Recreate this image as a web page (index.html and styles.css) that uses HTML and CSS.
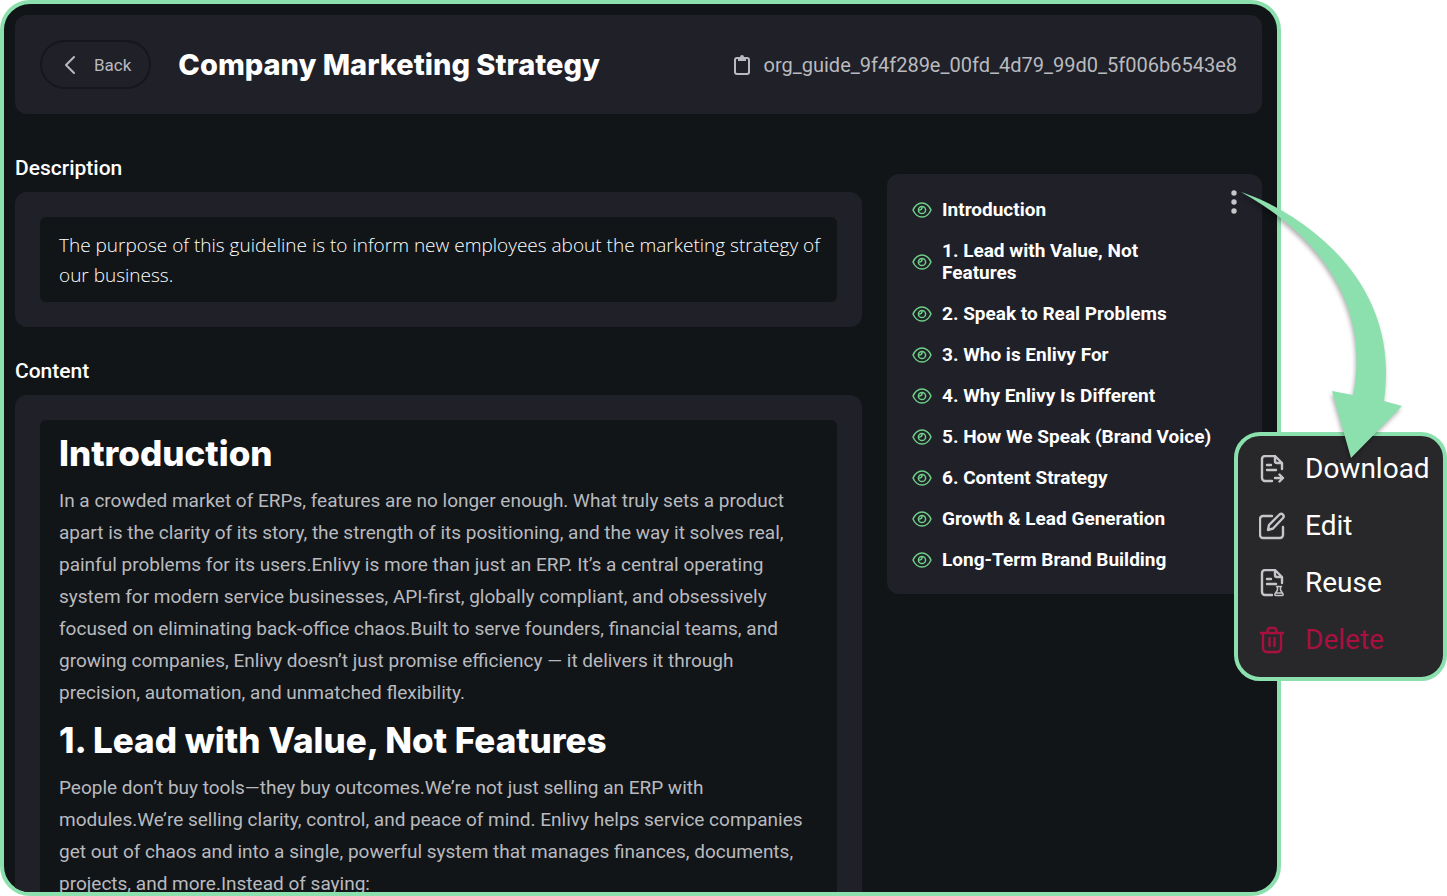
FILE: index.html
```
<!DOCTYPE html>
<html lang="en">
<head>
    <meta charset="UTF-8">
    <meta name="viewport" content="width=device-width, initial-scale=1.0">
    <title>Company Marketing Strategy</title>
    <link rel="stylesheet" href="styles.css">
</head>
<body>

    <!-- Shared icons -->
    <svg class="sprite" aria-hidden="true">
        <symbol id="eye" viewBox="0 0 20 16">
            <path d="M1 8C2.500 4.500 6 1 10 1s7.500 3.500 9 7c-1.500 3.500-5 7-9 7S2.500 11.500 1 8z"/>
            <circle cx="10" cy="8" r="3.600"/>
            <path d="M10 5.500c0 1.500-.8 2.300-2.300 2.400"/>
        </symbol>
        <symbol id="doc" viewBox="0 0 26 28">
            <path d="M13 26H6a3 3 0 0 1-3-3V4a3 3 0 0 1 3-3h10l7 7v6M16 1v5a2 2 0 0 0 2 2h5M8 10h4M8 15h9"/>
        </symbol>
    </svg>

    <div class="page">
        <main class="window">
            <header class="header card">
                <button type="button" class="back">
                    <svg width="12" height="20" viewBox="0 0 12 20"><path d="M10 2L2 10l8 8"/></svg>
                    Back
                </button>
                <h1>Company Marketing Strategy</h1>
                <button type="button" class="guide-id">
                    <svg width="16" height="20" viewBox="0 0 16 20">
                        <rect x="1" y="3" width="14" height="16" rx="2"/>
                        <path class="clip" d="M4 2h2a2 2 0 0 1 4 0h2v4H4z"/>
                    </svg>
                    org_guide_9f4f289e_00fd_4d79_99d0_5f006b6543e8
                </button>
            </header>

            <div class="columns">
                <div class="left">
                    <section>
                        <h3>Description</h3>
                        <div class="card block">
                            <p class="inner description">The purpose of this guideline is to inform new employees about the marketing strategy of<br>
                            our business.</p>
                        </div>
                    </section>
                    <section>
                        <h3>Content</h3>
                        <div class="card block">
                            <article class="inner content">
                                <h2>Introduction</h2>
                                <p>In a crowded market of ERPs, features are no longer enough. What truly sets a product<br>
                                apart is the clarity of its story, the strength of its positioning, and the way it solves real,<br>
                                painful problems for its users.Enlivy is more than just an ERP. It’s a central operating<br>
                                system for modern service businesses, API-first, globally compliant, and obsessively<br>
                                focused on eliminating back-office chaos.Built to serve founders, financial teams, and<br>
                                growing companies, Enlivy doesn’t just promise efficiency — it delivers it through<br>
                                precision, automation, and unmatched flexibility.</p>
                                <h2>1. Lead with Value, Not Features</h2>
                                <p>People don’t buy tools—they buy outcomes.We’re not just selling an ERP with<br>
                                modules.We’re selling clarity, control, and peace of mind. Enlivy helps service companies<br>
                                get out of chaos and into a single, powerful system that manages finances, documents,<br>
                                projects, and more.Instead of saying:</p>
                            </article>
                        </div>
                    </section>
                </div>

                <nav class="card toc" aria-label="Contents">
                    <ul>
                        <li><a href="#"><svg><use href="#eye"/></svg>Introduction</a></li>
                        <li><a href="#"><svg><use href="#eye"/></svg>1. Lead with Value, Not<br>Features</a></li>
                        <li><a href="#"><svg><use href="#eye"/></svg>2. Speak to Real Problems</a></li>
                        <li><a href="#"><svg><use href="#eye"/></svg>3. Who is Enlivy For</a></li>
                        <li><a href="#"><svg><use href="#eye"/></svg>4. Why Enlivy Is Different</a></li>
                        <li><a href="#"><svg><use href="#eye"/></svg>5. How We Speak (Brand Voice)</a></li>
                        <li><a href="#"><svg><use href="#eye"/></svg>6. Content Strategy</a></li>
                        <li><a href="#"><svg><use href="#eye"/></svg>Growth &amp; Lead Generation</a></li>
                        <li><a href="#"><svg><use href="#eye"/></svg>Long-Term Brand Building</a></li>
                    </ul>
                    <button type="button" class="more" aria-label="More actions">
                        <svg width="6" height="24" viewBox="0 0 6 24">
                            <circle cx="3" cy="3" r="2.700"/><circle cx="3" cy="12" r="2.700"/><circle cx="3" cy="21" r="2.700"/>
                        </svg>
                    </button>
                </nav>
            </div>
        </main>

        <div class="menu">
            <button type="button">
                <svg viewBox="0 0 26 28"><use href="#doc"/><path d="M16 23h8M20.500 19.500L24 23l-3.500 3.500"/></svg>
                Download
            </button>
            <button type="button">
                <svg viewBox="0 0 26 28"><path d="M13 4H4a3 3 0 0 0-3 3v16a3 3 0 0 0 3 3h17a3 3 0 0 0 3-3v-8M9 18l1-5L20.500 2.500c2.500-2 5.500 1 3.500 3.500L14 16.500z"/></svg>
                Edit
            </button>
            <button type="button">
                <svg viewBox="0 0 26 28"><use href="#doc"/><path class="thin" d="M17.500 17.500h5M18.500 18v3l-2.500 4c-.5 1 0 1.500 1 1.500h6c1 0 1.500-.5 1-1.500l-2.500-4v-3M17 24h6"/></svg>
                Reuse
            </button>
            <button type="button" class="delete">
                <svg viewBox="0 0 26 28"><path d="M2 7h22M8 6.500l1-3a2 2 0 0 1 2-1.500h4a2 2 0 0 1 2 1.500l1 3M4 7.500V22a4 4 0 0 0 4 4h10a4 4 0 0 0 4-4V7.500M10.500 12v8M15.500 12v8"/></svg>
                Delete
            </button>
        </div>

        <svg class="arrow" width="170" height="272" viewBox="0 0 170 272" aria-hidden="true">
            <path d="M1 2C50 18 146 76 146 182C146 193 145 203 144 211L162 216L111 268L92 201L113 205C130 120 85 48 1 2z"/>
        </svg>
    </div>

</body>
</html>
```

FILE: styles.css
```
* {
    box-sizing: border-box;
}

body {
    margin: 0;
    background-color: #fff;
    color: #fff;
    font-family: Roboto, sans-serif;
    font-size: 19px;
}

h1, h2, h3, p, ul {
    margin: 0;
    padding: 0;
}

button {
    background: none;
    border: none;
    padding: 0;
    color: inherit;
    font: inherit;
    cursor: pointer;
}

svg {
    flex: none;
    fill: none;
    stroke: currentColor;
    stroke-width: 2;
    stroke-linecap: round;
    stroke-linejoin: round;
}

.sprite {
    position: absolute;
    width: 0;
    height: 0;
}

.page {
    position: relative;
    height: 100vh;
    padding-right: 166px;
    overflow: hidden;
}

.window {
    height: 100%;
    padding: 11px 15px 0 11px;
    overflow: hidden;
    background-color: #111518;
    border: 4px solid #8be0ae;
    border-radius: 30px;
}

.card {
    background-color: #1f2028;
    border-radius: 12px;
}

.header {
    display: flex;
    align-items: center;
    padding: 25px;
}

.back {
    display: flex;
    align-items: center;
    gap: 18px;
    height: 49px;
    padding: 0 18px 0 22px;
    border: 2px solid #15171c;
    border-radius: 25px;
    color: #b9babf;
    font-size: 17px;
}

h1 {
    margin-left: 27px;
    font-family: Inter, sans-serif;
    font-size: 29px;
    font-weight: 800;
    line-height: 36px;
}

.guide-id {
    display: flex;
    align-items: center;
    gap: 13px;
    margin-left: auto;
    color: #b9babf;
    font-size: 20px;
}

.clip {
    fill: currentColor;
    stroke: none;
}

.columns {
    display: grid;
    grid-template-columns: minmax(0, 1fr) 375px;
    align-items: start;
    gap: 25px;
    padding-top: 42px;
}

.left {
    display: grid;
    grid-template-columns: minmax(0, 1fr);
    gap: 32px;
}

h3 {
    margin-bottom: 12px;
    font-size: 21px;
    font-weight: 500;
    line-height: 24px;
}

.block {
    padding: 25px;
}

.inner {
    background-color: #111518;
    border-radius: 6px;
}

.description {
    padding: 13px 12px 12px 19px;
    font-family: "Open Sans", sans-serif;
    font-weight: 300;
    line-height: 30px;
}

.content {
    padding: 2px 12px 2px 19px;
    color: #b9babf;
    line-height: 32px;
}

h2 {
    padding: 12px 0;
    color: #fff;
    font-family: Inter, sans-serif;
    font-size: 35px;
    font-weight: 800;
    line-height: 39px;
}

.toc {
    display: flex;
    justify-content: space-between;
    align-items: flex-start;
    margin-top: 18px;
    padding: 25px 25px 23px;
}

.toc ul {
    display: grid;
    gap: 19px;
    list-style: none;
}

.toc a {
    display: flex;
    align-items: center;
    gap: 10px;
    color: #fff;
    font-weight: 700;
    line-height: 22px;
    text-decoration: none;
}

.toc a svg {
    width: 20px;
    height: 16px;
    color: #6fcf86;
    stroke-width: 1.5;
}

.more {
    display: flex;
    margin-top: -9px;
    color: #c5c6ca;
}

.more svg {
    fill: currentColor;
    stroke: none;
}

.menu {
    position: absolute;
    top: 432px;
    right: 0;
    display: grid;
    align-content: start;
    width: 213px;
    padding: 4px 0 9px 21px;
    background-color: #28282a;
    border: 4px solid #8be0ae;
    border-radius: 26px;
}

.menu button {
    display: flex;
    align-items: center;
    gap: 20px;
    height: 57px;
    font-size: 28px;
}

.menu svg {
    width: 26px;
    height: 28px;
    color: #c5c6ca;
    stroke-width: 2.4;
}

.menu .thin {
    stroke-width: 1.5;
}

.menu .delete,
.menu .delete svg {
    color: #a9103f;
}

.arrow {
    position: absolute;
    top: 190px;
    right: 37px;
    fill: #8be0ae;
    stroke: none;
    filter: drop-shadow(-1px 3px 2px rgba(0, 0, 0, 0.3));
    pointer-events: none;
}
```
